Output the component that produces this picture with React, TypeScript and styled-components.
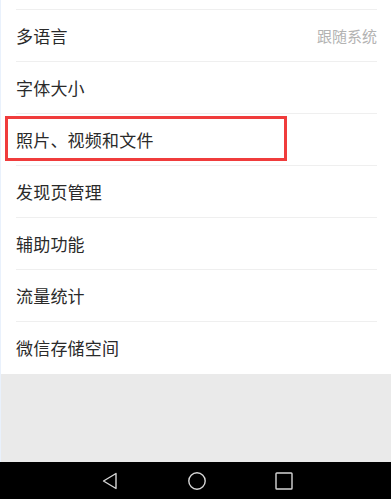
import React from "react";
import styled, { createGlobalStyle } from "styled-components";

const GlobalStyle = createGlobalStyle`
  html, body {
    margin: 0;
    padding: 0;
    background: #eaeaea;
  }
  body {
    font-family: "Noto Sans CJK SC", "Noto Sans", sans-serif;
  }
`;

type Item = { id: string; title: string; value?: string; marked?: boolean };

const items: Item[] = [
  { id: "lang", title: "多语言", value: "跟随系统" },
  { id: "font", title: "字体大小" },
  { id: "media", title: "照片、视频和文件", marked: true },
  { id: "discover", title: "发现页管理" },
  { id: "access", title: "辅助功能" },
  { id: "traffic", title: "流量统计" },
  { id: "storage", title: "微信存储空间" },
];

const App = () => {
  return (
    <Screen>
      <GlobalStyle />
      <Content>
        <List>
          <CutRow />
          {items.map((item) => (
            <Row key={item.id}>
              <Title>{item.title}</Title>
              {item.value && <Value>{item.value}</Value>}
              {item.marked && <Marker />}
            </Row>
          ))}
        </List>
        <Filler />
      </Content>
      <NavBar>
        <NavIcon viewBox="0 0 18 18">
          <path d="M15 1.5 L2.5 9 L15 16.5 Z" />
        </NavIcon>
        <NavIcon viewBox="0 0 18 18">
          <circle cx="9" cy="9" r="8.2" />
        </NavIcon>
        <NavIcon viewBox="0 0 18 18">
          <rect x="1" y="1" width="16" height="16" rx="0.8" />
        </NavIcon>
      </NavBar>
    </Screen>
  );
};

export default App;

const Screen = styled.div`
  width: 391px;
  height: 499px;
  display: flex;
  flex-direction: column;
  overflow: hidden;
`;

const Content = styled.div`
  flex: 1;
  display: flex;
  flex-direction: column;
  border-left: 1px solid #e9f1fc;
`;

const List = styled.ul`
  margin: 0;
  padding: 0 0 1px;
  list-style: none;
  background: #ffffff;
`;

const CutRow = styled.li`
  height: 9px;
`;

const Row = styled.li`
  position: relative;
  height: 51px;
  margin-left: 15px;
  margin-right: 14px;
  border-top: 1px solid #efefef;
  display: flex;
  align-items: center;
  justify-content: space-between;
`;

const Title = styled.span`
  font-size: 17px;
  color: #2a2a2a;
  letter-spacing: 0.2px;
`;

const Value = styled.span`
  font-size: 15px;
  color: #b3b3b3;
`;

const Marker = styled.span`
  position: absolute;
  left: -11px;
  top: 2px;
  width: 276px;
  height: 39px;
  border: 3px solid #f03c3c;
  pointer-events: none;
`;

const Filler = styled.div`
  flex: 1;
  background: #eaeaea;
`;

const NavBar = styled.nav`
  height: 37px;
  background: #000000;
  display: flex;
  align-items: center;
  justify-content: center;
  gap: 69px;
  padding-left: 2px;
`;

const NavIcon = styled.svg`
  width: 18px;
  height: 18px;
  fill: none;
  stroke: #d6d6d6;
  stroke-width: 1.4;
  stroke-linejoin: round;
`;
